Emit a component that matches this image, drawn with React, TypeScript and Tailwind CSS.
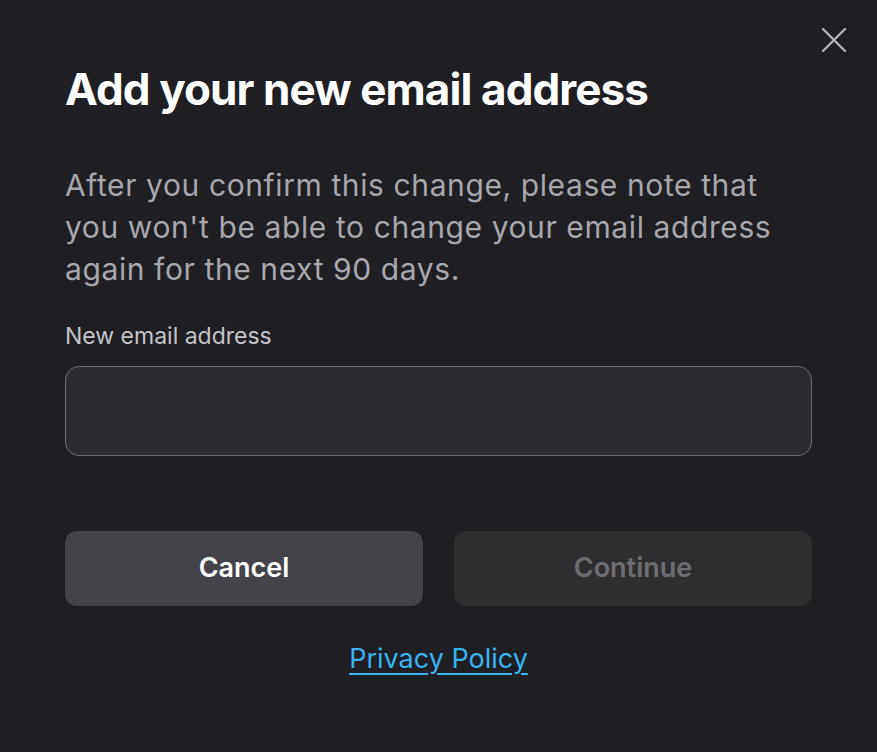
import { X } from "lucide-react";

export default function App() {
  return (
    <div className="relative h-[752px] w-[877px] bg-[#1f1f23] px-[65px] pt-[64px] font-['Inter',sans-serif]">
      {/* close */}
      <button className="absolute right-[21px] top-[18px] text-[#b4b4b8]">
        <X className="h-11 w-11" strokeWidth={1.3} />
      </button>

      <h1 className="text-[44px] font-bold leading-[50px] tracking-[-0.9px] text-white">
        Add your new email address
      </h1>

      <p className="mt-[50px] text-[30px] leading-[42px] tracking-[0.6px] text-[#a7a7ad]">
        After you confirm this change, please note that you won't be able to change your email address again for the next 90 days.
      </p>

      <label className="mt-[31px] block text-[23px] leading-[30px] text-[#c4c4ca]">
        New email address
      </label>
      <input
        type="email"
        className="mt-[15px] block h-[90px] w-full rounded-[14px] border border-[#6a6a70] bg-[#2a2a2f] px-5 text-[24px] text-white outline-none"
      />

      <div className="mt-[75px] grid grid-cols-2 gap-[31px]">
        <button className="h-[75px] rounded-[12px] bg-[#434349] text-[27px] font-semibold text-white">
          Cancel
        </button>
        <button className="h-[75px] rounded-[12px] bg-[#2e2e31] text-[27px] font-semibold text-[#6e6e72]">
          Continue
        </button>
      </div>

      <div className="mt-[37px] text-center">
        <a href="#" className="text-[27px] leading-[32px] text-[#3ab4ef] underline underline-offset-[5px]">
          Privacy Policy
        </a>
      </div>
    </div>
  );
}
